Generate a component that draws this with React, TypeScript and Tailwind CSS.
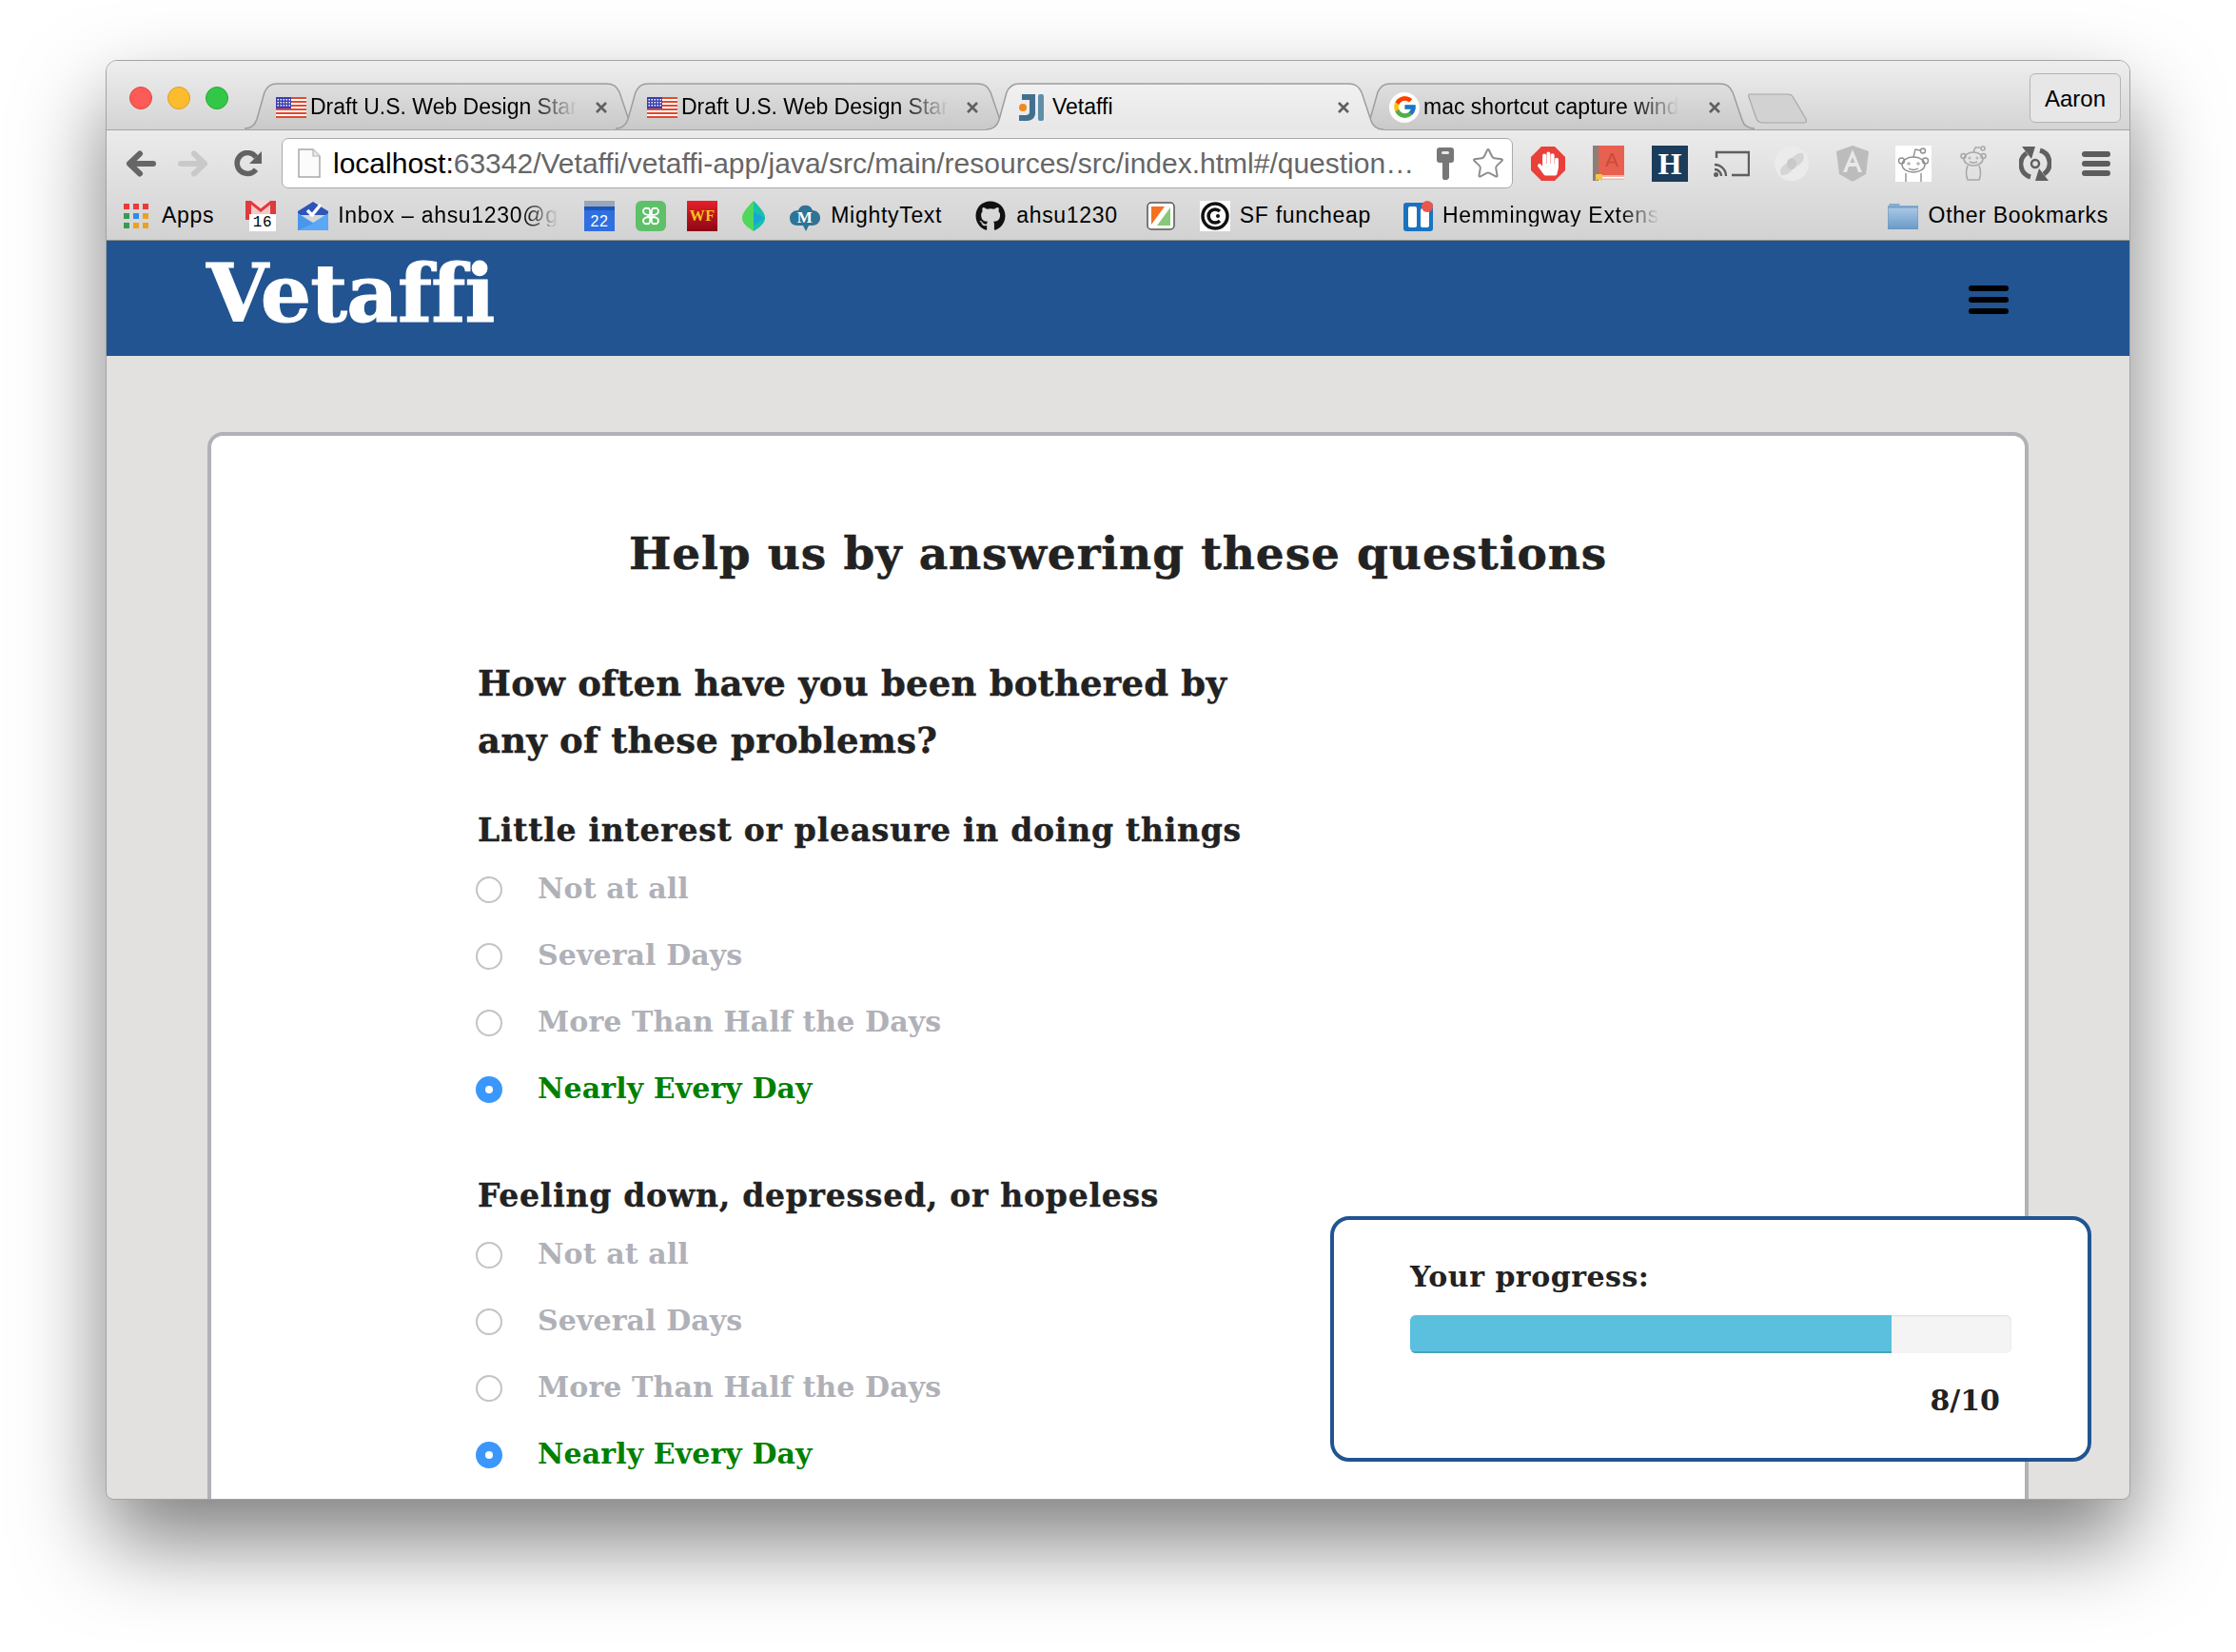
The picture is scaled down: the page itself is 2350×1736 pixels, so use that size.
// App.tsx
import { FaGithub, FaHandPaper } from "react-icons/fa";
import { FcGoogle } from "react-icons/fc";
import { Star } from "lucide-react";

const options = ["Not at all", "Several Days", "More Than Half the Days"];

const Flag = () => (
	<svg width="32" height="22" viewBox="0 0 32 22" className="shrink-0">
		<rect width="32" height="22" fill="#fff" />
		{[0, 4, 8, 12, 16, 20].map((y) => (
			<rect key={y} y={y} width="32" height="2" fill="#e2492f" />
		))}
		<rect width="16" height="12" fill="#3a3fb0" />
		{[2, 5, 8].map((y) =>
			[2, 5, 8, 11, 14].map((x) => <rect key={`${x}-${y}`} x={x - 0.5} y={y} width="1.5" height="1.5" fill="#fff" />)
		)}
	</svg>
);

const JetBrainsIcon = () => (
	<svg width="28" height="30" viewBox="0 0 28 30" className="shrink-0">
		<path d="M4 1h14v20c0 5-4 8-9 8H1v-6h7c2 0 4-1 4-3V7H4z" fill="#44708f" />
		<rect x="21" y="1" width="6" height="28" rx="2" fill="#5f8eab" />
		<circle cx="5" cy="15" r="4" fill="#f08a1c" />
	</svg>
);

const TabShape = ({ active }: { active?: boolean }) => (
	<svg viewBox="0 0 417 50" preserveAspectRatio="none" className="absolute inset-0 w-full h-full">
		<defs>
			<linearGradient id={active ? "tabOn" : "tabOff"} x1="0" y1="0" x2="0" y2="1">
				<stop offset="0" stopColor={active ? "#f1f1f1" : "#dfdfdf"} />
				<stop offset="1" stopColor={active ? "#e7e7e7" : "#c9c9c9"} />
			</linearGradient>
		</defs>
		<path
			d="M0 49 C7 49 11 45 13 39 L21 10 C24 3 28 1 34 1 L380 1 C388 1 391 4 394 10 L404 40 C406 46 411 49 417 49 L417 50 L0 50 Z"
			fill={`url(#${active ? "tabOn" : "tabOff"})`}
		/>
		<path
			d="M0 49 C7 49 11 45 13 39 L21 10 C24 3 28 1 34 1 L380 1 C388 1 391 4 394 10 L404 40 C406 46 411 49 417 49"
			fill="none"
			stroke="#9d9d9d"
			strokeWidth="1.5"
			vectorEffect="non-scaling-stroke"
		/>
	</svg>
);

const Tab = ({ title, icon, active, fade }: { title: string; icon: React.ReactNode; active?: boolean; fade?: boolean }) => (
	<div className={active ? "relative z-10 w-[417px] h-[50px] -mr-[27px] shrink-0" : "relative w-[417px] h-[49px] -mr-[27px] shrink-0"}>
		<TabShape active={active} />
		<div className="relative flex items-center h-[49px] pl-[33px] pt-[2px]">
			<span className="w-[36px] shrink-0">{icon}</span>
			<span className="w-[295px] shrink-0">
				<span
					className={
						fade
							? "block w-fit whitespace-nowrap text-[23px] text-black [mask-image:linear-gradient(to_right,black_82%,transparent)]"
							: "block w-fit whitespace-nowrap text-[23px] text-black"
					}
				>
					{title}
				</span>
			</span>
			<svg width="14" height="14" viewBox="0 0 14 14" className="ml-[4px] shrink-0">
				<path d="M2 2L12 12M12 2L2 12" stroke="#5f5f5f" strokeWidth="2.6" />
			</svg>
		</div>
	</div>
);

const Back = ({ color }: { color: string }) => (
	<svg width="32" height="28" viewBox="0 0 32 28" className="shrink-0">
		<path d="M29 14H7M15 3.5L4 14l11 10.5" fill="none" stroke={color} strokeWidth="6" strokeLinecap="round" strokeLinejoin="round" />
	</svg>
);

const Reload = () => (
	<svg width="30" height="28" viewBox="0 0 30 28" className="shrink-0">
		<path d="M23 20a11 11 0 1 1 0-13" fill="none" stroke="#626262" strokeWidth="5.5" />
		<path d="M29 1v13H16z" fill="#626262" />
	</svg>
);

const DocIcon = () => (
	<svg width="24" height="31" viewBox="0 0 24 31" className="shrink-0">
		<path d="M1 1h15l7 7v22H1z" fill="#fbfbfb" stroke="#a8a8a8" strokeWidth="1.5" />
		<path d="M16 1v7h7" fill="#e8e8e8" stroke="#b5b5b5" strokeWidth="1.2" />
	</svg>
);

const KeyIcon = () => (
	<svg width="18" height="34" viewBox="0 0 18 34" className="shrink-0">
		<path d="M3 0h12a3 3 0 0 1 3 3v10a3 3 0 0 1-3 3h-2v16l-2 2H7l-1-2V16H3a3 3 0 0 1-3-3V3a3 3 0 0 1 3-3z" fill="#777" />
		<rect x="5" y="4" width="8" height="3" rx="1.5" fill="#e8e8e8" />
	</svg>
);

const ToolbarIcons = () => (
	<div className="flex items-center h-full">
		{/* adblock */}
		<div className="relative w-[36px] h-[36px] ml-[19px] shrink-0">
			<svg width="36" height="36" viewBox="0 0 36 36" className="absolute inset-0">
				<path d="M11 0h14l11 11v14L25 36H11L0 25V11z" fill="#e9403a" />
			</svg>
			<FaHandPaper className="absolute left-[7px] top-[4px] w-[22px] h-[28px] text-white" />
		</div>
		{/* book */}
		<svg width="33" height="37" viewBox="0 0 33 37" className="ml-[29px] shrink-0">
			<rect width="33" height="33" fill="#e8604f" />
			<rect width="6" height="37" fill="#8a8078" />
			<rect x="6" y="31" width="27" height="5" fill="#f1b4a6" />
			<rect x="6" y="33" width="27" height="1.500" fill="#fff" />
			<path d="M3 30h7v7l-3.500-2L3 37z" fill="#f5c542" />
			<text x="20" y="22" textAnchor="middle" fontSize="21" fill="#c94a3a" fontFamily="Liberation Sans, sans-serif">A</text>
		</svg>
		{/* H */}
		<div className="flex items-center justify-center w-[38px] h-[38px] ml-[29px] bg-[#1b3c5a] shrink-0">
			<span className="text-white text-[32px] font-bold leading-none font-['Liberation_Serif',serif]">H</span>
		</div>
		{/* cast */}
		<svg width="38" height="28" viewBox="0 0 38 28" className="ml-[27px] shrink-0">
			<path d="M3 8V2h34v24H19" fill="none" stroke="#5e5e5e" strokeWidth="2.4" />
			<path d="M1 15a12 12 0 0 1 12 12M1 20a7 7 0 0 1 7 7" fill="none" stroke="#5e5e5e" strokeWidth="2.4" />
			<circle cx="2.500" cy="25.500" r="2.500" fill="#5e5e5e" />
		</svg>
		{/* swirl */}
		<svg width="38" height="38" viewBox="0 0 38 38" className="ml-[25px] shrink-0">
			<ellipse cx="19" cy="19" rx="18" ry="18.500" fill="#ebebeb" />
			<path d="M8 31C4 20 16 20 19 14 22 9 28 7 31 8 35 18 24 21 20 25 17 29 12 32 8 31z" fill="#d5d5d5" />
			<ellipse cx="19" cy="19" rx="5" ry="6" fill="#c9c9c9" />
		</svg>
		{/* angular */}
		<svg width="34" height="38" viewBox="0 0 34 38" className="ml-[28px] shrink-0">
			<path d="M17 0L34 6l-3 24-14 8-14-8L0 6z" fill="#bcbcbc" />
			<path d="M17 4L7 28h4l2-6h8l2 6h4zM14.500 18L17 12l2.500 6z" fill="#e8e8e8" fillRule="evenodd" />
		</svg>
		{/* reddit boxed */}
		<div className="w-[38px] h-[38px] ml-[28px] bg-white shrink-0">
			<svg width="38" height="38" viewBox="0 0 38 38">
				<g fill="none" stroke="#8f8f8f" strokeWidth="1.4">
					<ellipse cx="19" cy="20" rx="12" ry="8" />
					<circle cx="6.500" cy="16" r="3" />
					<circle cx="31.500" cy="16" r="3" />
					<path d="M19 12l2-8 5 1" />
					<circle cx="29" cy="5.500" r="2.500" />
					<path d="M11 29v9M27 29v9" />
					<path d="M14 24q5 3 10 0" />
				</g>
				<circle cx="14" cy="19" r="1.800" fill="#b5b5b5" />
				<circle cx="24" cy="19" r="1.800" fill="#b5b5b5" />
			</svg>
		</div>
		{/* reddit alien */}
		<svg width="30" height="38" viewBox="0 0 30 38" className="ml-[30px] shrink-0">
			<g fill="none" stroke="#a8a8a8" strokeWidth="1.600">
				<ellipse cx="14" cy="14" rx="10" ry="7" />
				<circle cx="3.500" cy="11" r="2.500" />
				<circle cx="24.500" cy="11" r="2.500" />
				<path d="M14 7l2-5 5 0" />
				<circle cx="24" cy="3" r="2" />
				<path d="M8 21q-3 8 0 15h12q3-7 0-15" />
				<path d="M10 17q4 2 8 0" />
			</g>
			<circle cx="10" cy="13" r="1.500" fill="#b8b8b8" />
			<circle cx="18" cy="13" r="1.500" fill="#b8b8b8" />
		</svg>
		{/* sync */}
		<svg width="34" height="38" viewBox="0 0 34 38" className="ml-[32px] shrink-0">
			<path d="M8 8a14 14 0 0 0 4 25M26 30a14 14 0 0 0-4-25" fill="none" stroke="#606060" strokeWidth="5" />
			<path d="M3 1h14l-4 13zM31 37H17l4-13z" fill="#606060" />
			<circle cx="17" cy="19" r="4" fill="none" stroke="#606060" strokeWidth="2.500" />
		</svg>
		<div className="flex flex-col gap-[4px] w-[30px] ml-[32px] shrink-0">
			<span className="h-[6px] rounded-[3px] bg-[#5c5c5c]" />
			<span className="h-[6px] rounded-[3px] bg-[#5c5c5c]" />
			<span className="h-[6px] rounded-[3px] bg-[#5c5c5c]" />
		</div>
	</div>
);

const Toolbar = () => (
	<div className="flex items-center h-[69px] pl-[20px] shrink-0">
		<Back color="#666666" />
		<span className="ml-[23px] -scale-x-100 shrink-0">
			<Back color="#c9c9c9" />
		</span>
		<span className="ml-[27px]">
			<Reload />
		</span>
		<div className="flex items-center w-[1294px] h-[53px] ml-[20px] pl-[16px] rounded-[7px] bg-white border border-[#a9a9a9] shrink-0">
			<DocIcon />
			<span className="w-[1140px] ml-[13px] whitespace-nowrap text-[30px] leading-none text-[#666]">
				<span className="text-black">localhost:</span>63342/Vetaffi/vetaffi-app/java/src/main/resources/src/index.html#/question…
			</span>
			<span className="ml-[20px]">
				<KeyIcon />
			</span>
			<Star className="w-[38px] h-[36px] ml-[17px] text-[#8d8d8d] shrink-0" strokeWidth={1.3} />
		</div>
		<ToolbarIcons />
	</div>
);

const AppsIcon = () => (
	<div className="grid grid-cols-3 gap-[4px] w-[26px] shrink-0">
		{["#ea3a3a", "#ea3a3a", "#ea3a3a", "#3a9a52", "#2f8bf0", "#f0a020", "#3a9a52", "#f0a020", "#f0a020"].map((c, i) => (
			<svg key={i} width="6" height="6" viewBox="0 0 6 6">
				<rect width="6" height="6" fill={c} />
			</svg>
		))}
	</div>
);

const GmailIcon = () => (
	<svg width="32" height="32" viewBox="0 0 32 32" className="shrink-0">
		<path d="M0 0h6l10 8 10-8h6v20H0z" fill="#e0393e" />
		<path d="M6 0h20L16 8z" fill="#f7d6d6" />
		<path d="M6 4l10 8 10-8v16H6z" fill="#f6c9c9" />
		<rect x="4" y="14" width="28" height="18" fill="#fff" />
		<text x="18" y="27" textAnchor="middle" fontSize="16" fill="#000" fontFamily="Liberation Mono, monospace">16</text>
	</svg>
);

const InboxIcon = () => (
	<svg width="32" height="30" viewBox="0 0 32 30" className="shrink-0">
		<path d="M16 0l16 10v4H0v-4z" fill="#2d54b8" />
		<path d="M0 12l16 10 16-10v18H0z" fill="#5aa7f5" />
		<path d="M0 13l16 10L0 30z" fill="#4a96ea" />
		<path d="M10 9l5 5 9-11" fill="none" stroke="#fff" strokeWidth="3.500" />
	</svg>
);

const CalIcon = () => (
	<svg width="32" height="32" viewBox="0 0 32 32" className="shrink-0">
		<rect y="0" width="32" height="8" fill="#9aa6b8" />
		<rect y="6" width="32" height="26" fill="#2f6fe0" />
		<rect x="0" y="6" width="32" height="4" fill="#1d56bd" />
		<text x="16" y="27" textAnchor="middle" fontSize="16" fill="#fff" fontFamily="Liberation Sans, sans-serif">22</text>
	</svg>
);

const CloverIcon = () => (
	<svg width="32" height="32" viewBox="0 0 32 32" className="shrink-0">
		<rect width="32" height="32" rx="6" fill="#5fc06a" />
		<g fill="none" stroke="#fff" strokeWidth="1.800">
			<path d="M15 15c-5 0-7-2-7-4s2-4 4-3c2-1 4 1 3 7z" />
			<path d="M17 15c5 0 7-2 7-4s-2-4-4-3c-2-1-4 1-3 7z" />
			<path d="M15 17c-5 0-7 2-7 4s2 4 4 3c2 1 4-1 3-7z" />
			<path d="M17 17c5 0 7 2 7 4s-2 4-4 3c-2 1-4-1-3-7z" />
		</g>
	</svg>
);

const WfIcon = () => (
	<div className="flex items-center justify-center w-[32px] h-[32px] bg-gradient-to-b from-[#e8202a] to-[#8c0714] shrink-0">
		<span className="text-[#f5c518] text-[16px] leading-none font-bold font-['Liberation_Serif',serif]">WF</span>
	</div>
);

const LeafIcon = () => (
	<svg width="24" height="32" viewBox="0 0 24 32" className="shrink-0">
		<path d="M12 0C4 8 0 13 0 18c0 6 6 10 12 14z" fill="#4fd85a" />
		<path d="M12 0c8 8 12 13 12 18 0 6-6 10-12 14z" fill="#17c2a8" />
		<path d="M12 12l12 6-12 8z" fill="#16a6d8" />
	</svg>
);

const MightyIcon = () => (
	<svg width="32" height="32" viewBox="0 0 32 32" className="shrink-0">
		<path d="M9 10a8 8 0 0 1 15 0c5 0 8 4 8 8s-3 8-8 8h-4l-3 6-3-6H8c-5 0-8-3-8-8s4-8 9-8z" fill="#2f7396" />
		<text x="16" y="23" textAnchor="middle" fontSize="17" fontWeight="700" fill="#fff" fontFamily="Liberation Serif, serif">M</text>
	</svg>
);

const SlashIcon = () => (
	<svg width="30" height="30" viewBox="0 0 30 30" className="shrink-0">
		<rect x="1" y="1" width="28" height="28" rx="4" fill="#fff" stroke="#555" strokeWidth="1.500" />
		<path d="M5 5h14L5 24z" fill="#f47120" />
		<path d="M25 6v19H11z" fill="#86c976" />
	</svg>
);

const FuncheapIcon = () => (
	<svg width="32" height="32" viewBox="0 0 32 32" className="shrink-0">
		<rect width="32" height="32" fill="#fff" />
		<circle cx="16" cy="16" r="13" fill="none" stroke="#111" strokeWidth="3.500" />
		<path d="M21 11a7 7 0 1 0 0 10" fill="none" stroke="#111" strokeWidth="3.500" />
		<circle cx="19" cy="16" r="2" fill="#111" />
	</svg>
);

const HemmingwayIcon = () => (
	<svg width="32" height="32" viewBox="0 0 32 32" className="shrink-0">
		<rect y="2" width="31" height="30" rx="3" fill="#1a73c0" />
		<rect x="5" y="6" width="9" height="22" rx="2" fill="#fff" />
		<rect x="18" y="8" width="9" height="20" rx="2" fill="#fff" />
		<circle cx="25" cy="6" r="6" fill="#e9574a" />
	</svg>
);

const FolderIcon = () => (
	<svg width="32" height="28" viewBox="0 0 32 28" className="shrink-0">
		<path d="M0 3h2a1 1 0 0 1 1-2h8a1 1 0 0 1 1 2h20v25H0z" fill="#83abd1" />
		<rect y="5" width="32" height="23" fill="url(#folderFill)" stroke="#7095bb" />
		<defs>
			<linearGradient id="folderFill" x1="0" y1="0" x2="0" y2="1">
				<stop offset="0" stopColor="#a9c8e6" />
				<stop offset="1" stopColor="#6b9ac7" />
			</linearGradient>
		</defs>
	</svg>
);

const Bookmarks = () => (
	<div className="flex items-center h-[47px] pl-[18px] pb-[6px] text-[23px] leading-none tracking-[0.7px] text-black whitespace-nowrap shrink-0">
		<AppsIcon />
		<span className="ml-[14px]">Apps</span>
		<span className="ml-[33px]">
			<GmailIcon />
		</span>
		<span className="ml-[23px]">
			<InboxIcon />
		</span>
		<span className="w-[231px] ml-[10px]">
			<span className="block w-fit [mask-image:linear-gradient(to_right,black_84%,transparent)]">Inbox – ahsu1230@g</span>
		</span>
		<span className="ml-[28px]">
			<CalIcon />
		</span>
		<span className="ml-[22px]">
			<CloverIcon />
		</span>
		<span className="ml-[22px]">
			<WfIcon />
		</span>
		<span className="ml-[26px]">
			<LeafIcon />
		</span>
		<span className="ml-[26px]">
			<MightyIcon />
		</span>
		<span className="ml-[11px]">MightyText</span>
		<FaGithub className="w-[32px] h-[32px] ml-[35px] text-[#111] shrink-0" />
		<span className="ml-[11px]">ahsu1230</span>
		<span className="ml-[30px]">
			<SlashIcon />
		</span>
		<span className="ml-[26px]">
			<FuncheapIcon />
		</span>
		<span className="ml-[10px]">SF funcheap</span>
		<span className="ml-[34px]">
			<HemmingwayIcon />
		</span>
		<span className="w-[228px] ml-[9px]">
			<span className="block w-fit [mask-image:linear-gradient(to_right,black_82%,transparent)]">Hemmingway Extens</span>
		</span>
		<span className="ml-auto">
			<FolderIcon />
		</span>
		<span className="ml-[11px] mr-[22px]">Other Bookmarks</span>
	</div>
);

const Radio = ({ checked }: { checked?: boolean }) =>
	checked ? (
		<span className="flex items-center justify-center w-[28px] h-[28px] mt-[4px] rounded-full bg-[#3b97fb] shrink-0">
			<span className="w-[8px] h-[8px] rounded-full bg-white" />
		</span>
	) : (
		<span className="w-[28px] h-[28px] mt-[4px] rounded-full bg-white border-2 border-[#c4c4c4] shrink-0" />
	);

const Question = ({ title, className }: { title: string; className: string }) => (
	<div className={className}>
		<h3 className="text-[33px] leading-[50px] font-bold tracking-[0.75px] text-[#222] [-webkit-text-stroke:0.4px_#222]">{title}</h3>
		{options.map((o) => (
			<div key={o} className="flex items-center h-[70px] -ml-[2px]">
				<Radio />
				<span className="ml-[37px] text-[30px] font-bold tracking-[0.1px] text-[#b0b1b8]">{o}</span>
			</div>
		))}
		<div className="flex items-center h-[70px] -ml-[2px]">
			<Radio checked />
			<span className="ml-[37px] text-[30px] font-bold tracking-[0.1px] text-[#008000]">Nearly Every Day</span>
		</div>
	</div>
);

export default function App() {
	return (
		<div className="w-[2350px] h-[1736px] pt-[63px] pl-[111px] bg-white overflow-hidden font-['Liberation_Sans',sans-serif]">
			<div className="relative flex flex-col w-[2128px] h-[1513px] overflow-hidden rounded-t-[12px] rounded-b-[8px] border border-[#a4a4a4] bg-[#e2e1e0] shadow-[0_44px_90px_rgba(0,0,0,0.5)]">
				{/* title bar */}
				<div className="relative flex h-[73px] border-b border-[#a3a3a3] bg-gradient-to-b from-[#eeeeee] to-[#d4d4d4] shrink-0">
					<div className="flex gap-[16px] pl-[24px] pt-[27px] w-[145px] shrink-0">
						<span className="w-[24px] h-[24px] rounded-full bg-[#fc5b57] border border-[#e3443f]" />
						<span className="w-[24px] h-[24px] rounded-full bg-[#fdbb2e] border border-[#df9e26]" />
						<span className="w-[24px] h-[24px] rounded-full bg-[#33c748] border border-[#27aa35]" />
					</div>
					<div className="flex items-start pt-[23px]">
						<Tab title="Draft U.S. Web Design Star" icon={<Flag />} fade />
						<Tab title="Draft U.S. Web Design Star" icon={<Flag />} fade />
						<Tab title="Vetaffi" icon={<JetBrainsIcon />} active />
						<Tab title="mac shortcut capture wind" icon={<span className="flex items-center justify-center w-[32px] h-[32px] rounded-full bg-white"><FcGoogle className="w-[27px] h-[27px]" /></span>} fade />
						<svg width="64" height="34" viewBox="0 0 64 34" className="relative mt-[9px] ml-[20px] shrink-0">
							<path d="M2 3h40c4 0 5 2 6 4l13 22c1 3 0 4-3 4H16c-4 0-6-2-7-4L1 6c-1-2 0-3 1-3z" fill="#d2d2d2" stroke="#a8a8a8" strokeWidth="1.200" />
						</svg>
					</div>
					<div className="absolute right-[9px] top-[13px] flex items-center justify-center w-[96px] h-[52px] pt-[1px] rounded-[6px] border border-[#b4b4b4] bg-[#e7e7e7] text-[24px] text-black">
						Aaron
					</div>
				</div>
				{/* toolbar + bookmarks */}
				<div className="flex flex-col h-[116px] border-b border-[#8d8d8d] bg-gradient-to-b from-[#ebebeb] to-[#d2d2d2] shrink-0">
					<Toolbar />
					<Bookmarks />
				</div>
				{/* page header */}
				<header className="flex items-center justify-between h-[121px] pl-[105px] pr-[127px] bg-[#215491] shrink-0">
					<span className="-mt-[10px] text-[84px] leading-none font-bold tracking-[-0.8px] text-white [-webkit-text-stroke:1px_white] font-['DejaVu_Serif',serif]">Vetaffi</span>
					<div className="flex flex-col gap-[6px] w-[42px] mt-[2px]">
						<span className="h-[6px] rounded-full bg-black" />
						<span className="h-[6px] rounded-full bg-black" />
						<span className="h-[6px] rounded-full bg-black" />
					</div>
				</header>
				{/* page */}
				<main className="flex-1 pt-[80px] px-[106px] font-['DejaVu_Serif',serif]">
					<div className="h-[1200px] pt-[94px] pl-[280px] rounded-[16px] border-4 border-[#b1b2b7] bg-white">
						<h1 className="-ml-[280px] text-center text-[47px] leading-[60px] font-bold tracking-[0.9px] text-[#222] [-webkit-text-stroke:0.5px_#222]">
							Help us by answering these questions
						</h1>
						<h2 className="mt-[76px] text-[37px] leading-[60px] font-bold tracking-[0.2px] text-[#222] [-webkit-text-stroke:0.4px_#222]">
							How often have you been bothered by
							<br />
							any of these problems?
						</h2>
						<Question title="Little interest or pleasure in doing things" className="mt-[40px]" />
						<Question title="Feeling down, depressed, or hopeless" className="mt-[54px]" />
					</div>
				</main>
				{/* progress box */}
				<div className="absolute right-[40px] bottom-[39px] w-[800px] h-[258px] pt-[40px] px-[80px] rounded-[20px] border-4 border-[#215491] bg-white font-['DejaVu_Serif',serif] text-[#222]">
					<div className="text-[30px] leading-[40px] font-bold tracking-[0.5px]">Your progress:</div>
					<div className="h-[40px] mt-[20px] overflow-hidden rounded-[6px] bg-[#f4f4f4] shadow-[inset_0_1px_2px_rgba(0,0,0,0.1)]">
						<div className="w-4/5 h-full bg-[#5bc0de] border-b-2 border-[#4aa3bd]" />
					</div>
					<div className="mt-[30px] pr-[12px] text-right text-[30px] leading-[40px] font-bold">8/10</div>
				</div>
			</div>
		</div>
	);
}
